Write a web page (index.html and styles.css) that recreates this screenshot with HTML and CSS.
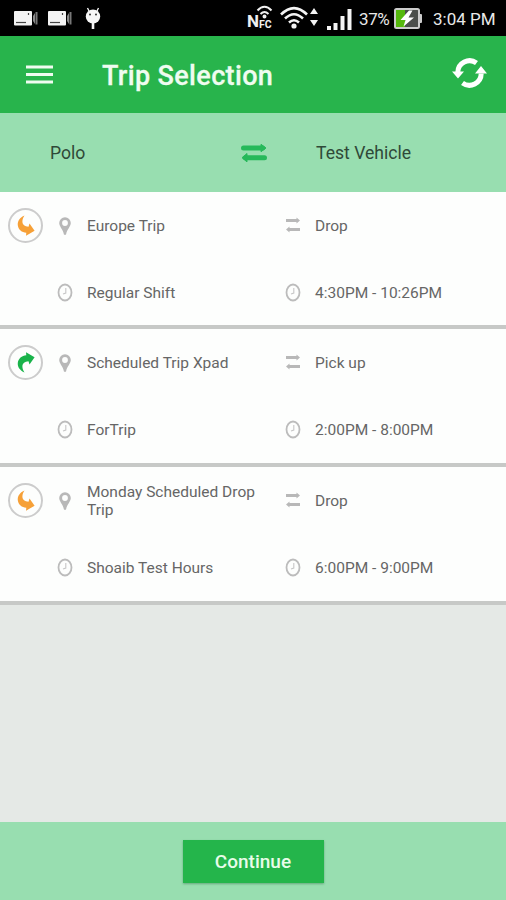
FILE: index.html
```html
<!DOCTYPE html>
<html lang="en">
<head>
<meta charset="utf-8">
<title>Trip Selection</title>
<link rel="stylesheet" href="styles.css">
</head>
<body>
<svg class="defs" width="0" height="0" aria-hidden="true">
  <symbol id="video" viewBox="0 0 26 16">
    <rect x="1" y="1" width="18" height="14.500" rx="1" fill="#f4f4f4"/>
    <path d="M3 12.500h10" stroke="#444" stroke-width="1.200"/>
    <path d="M15.500 3v2" stroke="#444" stroke-width="1.200"/>
    <path d="M20 6l2-3v11l-2-3z" fill="#888"/>
    <path d="M23.500 2v12.500" stroke="#777" stroke-width="2"/>
  </symbol>
  <symbol id="pin" viewBox="0 0 12 18">
    <path fill-rule="evenodd" d="M6 .3A5.800 5.800 0 0 0 .2 6.100C.2 9.500 4 12.500 5 17.700h2C8 12.500 11.800 9.500 11.800 6.100A5.800 5.800 0 0 0 6 .3zM6 3.100a2.900 2.900 0 1 1 0 5.800 2.900 2.900 0 0 1 0-5.800z" fill="#b8b8b8"/>
  </symbol>
  <symbol id="clock" viewBox="0 0 16 19">
    <ellipse cx="8" cy="9.500" rx="6.500" ry="8" fill="none" stroke="#bcbcbc" stroke-width="1.800"/>
    <path d="M8.800 5v5L6 11" fill="none" stroke="#c6c6c6" stroke-width="1.100"/>
  </symbol>
  <symbol id="swap" viewBox="0 0 16 16">
    <path d="M1 3.500h12M3 12.500h12" stroke="#b8b8b8" stroke-width="2.800"/>
    <path d="M11.500.5l3.500 3-3.500 3zM4.500 9.500l-3.500 3 3.500 3z" fill="#b8b8b8"/>
  </symbol>
  <symbol id="turn" viewBox="0 0 18 21">
    <path d="M7.500 20.500C3 18.500.3 15 .8 10.800 1.300 6.500 4.800 3.600 9.300 3.200L9 .3 17.600 5.300 12.500 12.500 11.500 9.300C7.800 9.500 5.500 11.500 5.400 14.300c0 2.300.8 4.200 2.100 6.200z" fill="currentColor"/>
  </symbol>
</svg>

<div class="status">
  <div class="notices">
    <svg width="26" height="16"><use href="#video"/></svg>
    <svg width="26" height="16"><use href="#video"/></svg>
    <svg class="robot" width="16" height="23" viewBox="0 0 16 23">
      <path d="M2.500 1l2 4M13.500 1l-2 4" stroke="#fff" stroke-width="1.300"/>
      <ellipse cx="8" cy="9.500" rx="7.200" ry="7" fill="#f6f6f6"/>
      <path d="M8 15v7" stroke="#f6f6f6" stroke-width="2.600"/>
      <circle cx="5" cy="7.500" r="1" fill="#333"/><circle cx="11" cy="7.500" r="1" fill="#333"/>
    </svg>
  </div>
  <div class="nfc">
    <svg width="17" height="14" viewBox="0 0 17 14" fill="none" stroke="#f0f0f0" stroke-width="2">
      <path d="M1.500 5.500Q8.500-2 15.500 5.500M4.500 9q4-4 8 0"/><circle cx="8.500" cy="11.500" r="1" fill="#f0f0f0"/>
    </svg>
    <span class="nfc-n">N</span><span class="nfc-fc">FC</span>
  </div>
  <svg class="wifi" width="38" height="24" viewBox="0 0 38 24" fill="none" stroke="#f4f4f4" stroke-width="2.600">
    <path d="M1 8.500Q14-4.500 27 8.500M5 12.500q9-8.500 18 0M9 16.500q5-4.500 10 0"/>
    <circle cx="14" cy="20" r="2.600" fill="#f4f4f4" stroke="none"/>
    <path d="M30 8l4-6 4 6zM30 14h8l-4 6z" fill="#f4f4f4" stroke="none"/>
  </svg>
  <svg class="signal" width="25" height="22" viewBox="0 0 25 22" fill="#f4f4f4">
    <path d="M0 18h4v4H0zM6.500 15h4v7h-4zM13.500 8h4v14h-4zM20.500 1h4v21h-4z"/>
  </svg>
  <span class="percent">37%</span>
  <svg class="battery" width="28" height="21" viewBox="0 0 28 21">
    <rect x="25" y="6" width="3" height="9" rx="1" fill="#ccc"/>
    <rect x="1" y="1" width="24" height="19" rx="1.500" fill="#4c4f4c" stroke="#ccc" stroke-width="2"/>
    <path d="M2 2h9v17H2z" fill="#55b80d"/>
    <path d="M15 2.500L6.500 12h5L9.500 18.500 20 9.500h-5.500l4-7z" fill="#fff"/>
  </svg>
  <span class="time">3:04 PM</span>
</div>

<header class="appbar">
  <svg class="menu" width="27" height="19" viewBox="0 0 27 19"><path d="M0 2h27M0 9.500h27M0 17h27" stroke="#effcf0" stroke-width="3.200"/></svg>
  <h1>Trip Selection</h1>
  <svg class="refresh" width="35" height="30" viewBox="0 0 35 30">
    <path d="M5.800 14.500A11.800 11.800 0 0 1 24.500 5M29.200 15.500A11.800 11.800 0 0 1 10.500 25" fill="none" stroke="#fff" stroke-width="5"/>
    <path d="M0 13.500h12L6 20.500zM23 15.500h12L29 8z" fill="#fff"/>
  </svg>
</header>

<div class="vehicles">
  <span class="from">Polo</span>
  <svg width="26" height="20" viewBox="0 0 26 20">
    <path d="M2.500 5h19M4.500 14.700h19" stroke="#26b95a" stroke-width="5" stroke-linecap="round"/>
    <path d="M20 1.300l5 3.700-5 3.700zM6 10.500l-5 4.200 5 4.200z" fill="#26b95a" stroke="#26b95a" stroke-linejoin="round"/>
  </svg>
  <span class="to">Test Vehicle</span>
</div>

<main>
  <section class="trip">
    <div class="badge drop"><svg width="18" height="21"><use href="#turn"/></svg></div>
    <svg class="icon" width="12" height="18"><use href="#pin"/></svg><p>Europe Trip</p>
    <svg class="icon swap" width="16" height="16"><use href="#swap"/></svg><p>Drop</p>
    <svg class="icon clock" width="16" height="19"><use href="#clock"/></svg><p>Regular Shift</p>
    <svg class="icon" width="16" height="19"><use href="#clock"/></svg><p class="hours">4:30PM - 10:26PM</p>
  </section>
  <section class="trip">
    <div class="badge pickup"><svg width="18" height="21"><use href="#turn"/></svg></div>
    <svg class="icon" width="12" height="18"><use href="#pin"/></svg><p>Scheduled Trip Xpad</p>
    <svg class="icon swap" width="16" height="16"><use href="#swap"/></svg><p>Pick up</p>
    <svg class="icon clock" width="16" height="19"><use href="#clock"/></svg><p>ForTrip</p>
    <svg class="icon" width="16" height="19"><use href="#clock"/></svg><p class="hours">2:00PM - 8:00PM</p>
  </section>
  <section class="trip">
    <div class="badge drop"><svg width="18" height="21"><use href="#turn"/></svg></div>
    <svg class="icon" width="12" height="18"><use href="#pin"/></svg><p>Monday Scheduled Drop Trip</p>
    <svg class="icon swap" width="16" height="16"><use href="#swap"/></svg><p>Drop</p>
    <svg class="icon clock" width="16" height="19"><use href="#clock"/></svg><p>Shoaib Test Hours</p>
    <svg class="icon" width="16" height="19"><use href="#clock"/></svg><p class="hours">6:00PM - 9:00PM</p>
  </section>
</main>

<footer><button type="button">Continue</button></footer>
</body>
</html>
```
FILE: styles.css
```css
* { box-sizing: border-box; }
body {
  margin: 0;
  height: 900px;
  display: flex;
  flex-direction: column;
  overflow: hidden;
  background: #e5e9e6;
  font-family: Roboto, "Liberation Sans", sans-serif;
}
svg { display: block; flex: none; }
.defs { position: absolute; }
h1, p { margin: 0; font-weight: 400; }

.status {
  flex: none;
  height: 36px;
  display: flex;
  align-items: center;
  padding: 0 12px 0 13px;
  background: #000;
  color: #e8e8e8;
}
.notices { display: flex; align-items: center; gap: 8px; margin-right: auto; }
.robot { margin-left: 4px; }
.nfc {
  display: grid;
  grid-template: 13px 11px / 12px 14px;
  width: 26px;
  color: #f0f0f0;
  font-weight: 700;
}
.nfc svg { grid-area: 1 / 1 / 2 / 3; justify-self: end; margin-top: -1px; }
.nfc-n { grid-area: 2 / 1; font-size: 17px; line-height: 17px; margin-top: -6px; }
.nfc-fc { grid-area: 2 / 2; font-size: 10.500px; line-height: 11px; }
.wifi { margin-left: 7px; }
.signal { margin: 2px 0 0 9px; }
.percent { width: 31px; margin: 2px 0 0 7px; font-size: 17px; letter-spacing: -0.400px; }
.battery { margin-left: 4px; }
.time { width: 61px; margin: 2px 0 0 11px; font-size: 17px; white-space: nowrap; }

.appbar {
  flex: none;
  height: 77px;
  display: flex;
  align-items: center;
  padding: 0 19px 0 26px;
  background: #28b44c;
}
h1 {
  margin: 3px auto 0 49px;
  font-size: 27px;
  font-weight: 500;
  letter-spacing: 0.350px;
  color: #effcf0;
  -webkit-text-stroke: 0.300px #effcf0;
}
.refresh { margin-top: -3px; }

.vehicles {
  flex: none;
  height: 79px;
  display: grid;
  grid-template-columns: 191px 75px 1fr;
  align-items: center;
  padding-left: 50px;
  background: #98deb0;
  color: #2f4938;
  font-size: 17.600px;
}

.trip {
  height: 138px;
  display: grid;
  grid-template: 68px 66px / 44px 43px 184px 44px 1fr;
  align-items: center;
  background: #fdfefd;
  border-bottom: 4px solid #c7c9c7;
  color: #666;
  font-size: 15.500px;
  line-height: 18px;
}
.trip:first-child { height: 137px; grid-template-rows: 68px 65px; }
.icon { justify-self: center; margin: -1px 1px 0 0; }
.swap { margin: -2px 0 0; }
.clock { grid-column: 2; }
.badge {
  width: 35px;
  height: 35px;
  display: grid;
  place-items: center;
  margin: -2px 0 0 8px;
  border: 2px solid #ccc;
  border-radius: 50%;
}
.pickup { color: #19b34a; }
.drop { color: #f6a037; }
.drop svg { transform: scaleY(-1); }

footer {
  flex: none;
  height: 78px;
  margin-top: auto;
  display: flex;
  justify-content: center;
  align-items: center;
  background: #98deb0;
}
button {
  width: 141px;
  height: 43px;
  border: 0;
  padding: 0;
  background: #24b54b;
  box-shadow: 0 1px 2px #65a87c;
  color: #e8fce9;
  font: 500 19px Roboto, sans-serif;
}
```
